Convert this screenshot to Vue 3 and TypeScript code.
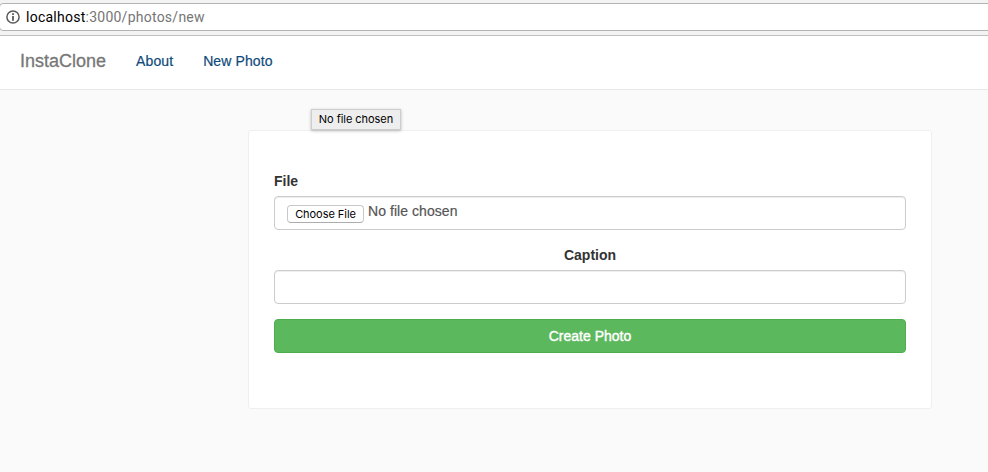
<script setup lang="ts">
import { ref } from 'vue'

interface NavLink {
  label: string
  href: string
}

const links: NavLink[] = [
  { label: 'About', href: '#about' },
  { label: 'New Photo', href: '#new' },
]
const caption = ref<string>('')
const fileStatus = ref<string>('No file chosen')
</script>

<template>
  <div class="window">
    <header class="toolbar">
      <div class="address">
        <svg class="info" width="14" height="14" viewBox="0 0 14 14" aria-hidden="true">
          <circle cx="7" cy="7" r="6.1" fill="none" stroke="#5a5a5a" stroke-width="1.5" />
          <rect x="6.1" y="3.2" width="1.8" height="1.8" fill="#5a5a5a" />
          <rect x="6.1" y="6" width="1.8" height="4.8" fill="#5a5a5a" />
        </svg>
        <span class="url"><span class="host">localhost</span>:3000/photos/new</span>
      </div>
    </header>

    <nav class="navbar">
      <a class="brand" href="#">InstaClone</a>
      <a v-for="link in links" :key="link.label" class="nav-link" :href="link.href">{{ link.label }}</a>
    </nav>

    <main class="page">
      <form class="card" @submit.prevent>
        <label class="label" for="file">File</label>
        <div class="control file">
          <button id="file" class="choose" type="button">Choose File</button>
          <span class="status">{{ fileStatus }}</span>
        </div>
        <label class="label centered" for="caption">Caption</label>
        <input id="caption" v-model="caption" class="control" type="text" />
        <button class="submit" type="submit"><span class="submit-text">Create Photo</span></button>
        <div class="tooltip" role="tooltip">{{ fileStatus }}</div>
      </form>
    </main>
  </div>
</template>

<style>
body {
  background: #fafafa;
}
</style>

<style scoped>
.window,
.window * {
  box-sizing: border-box;
}
.window {
  min-height: 472px;
  overflow: hidden;
  background: #fafafa;
  color: #333;
  font: 14px/20px "Liberation Sans", Arial, sans-serif;
}
.toolbar {
  height: 36px;
  padding-top: 3px;
  background: #f3f3f3;
  border-bottom: 1px solid #bfbfbf;
}
.address {
  display: flex;
  align-items: center;
  height: 28px;
  margin: 0 -6px 0 -1px;
  padding-left: 6px;
  background: #fff;
  border: 1px solid #b4b4b4;
  border-radius: 4px;
}
.info {
  flex: none;
  margin-right: 6px;
}
.url {
  color: #757575;
  font-family: Roboto, sans-serif;
  font-size: 14px;
  letter-spacing: 0.25px;
  white-space: nowrap;
}
.host {
  color: #000;
}
.navbar {
  display: flex;
  align-items: center;
  height: 54px;
  padding: 0 20px 3px;
  background: #fff;
  border-bottom: 1px solid #e7e7e7;
}
.brand {
  margin-right: 30px;
  color: #777;
  font-size: 18px;
  text-decoration: none;
  -webkit-text-stroke: 0.3px #777;
}
.nav-link {
  margin-right: 30px;
  color: #125688;
  color: #0f4a7b;
  letter-spacing: 0.1px;
  text-decoration: none;
  -webkit-text-stroke: 0.2px #0f4a7b;
}
.page {
  padding: 40px 56px 0 248px;
}
.card {
  position: relative;
  display: flex;
  flex-direction: column;
  height: 279px;
  padding: 40px 25px;
  background: #fff;
  border: 1px solid #efefef;
  border-radius: 3px;
}
.label {
  margin-bottom: 5px;
  font-weight: bold;
}
.centered {
  text-align: center;
}
.control {
  flex: none;
  width: 100%;
  height: 34px;
  margin: 0 0 15px;
  padding: 6px 12px;
  background: #fff;
  border: 1px solid #ccc;
  border-radius: 4px;
  outline: none;
  box-shadow: inset 0 1px 1px rgba(0, 0, 0, 0.075);
  color: #555;
  font: inherit;
}
.file {
  display: flex;
  align-items: flex-start;
  padding-top: 4px;
}
.status {
  letter-spacing: 0.06px;
  -webkit-text-stroke: 0.2px #555;
}
.choose {
  width: 77px;
  height: 18px;
  margin: 4px 4px 0 0;
  padding: 0;
  background: #fff;
  border: 1px solid #c8c8c8;
  border-bottom-color: #adadad;
  border-radius: 4px;
  color: #000;
  font: 11px/16px Inter, sans-serif;
  letter-spacing: -0.05px;
  white-space: nowrap;
}
.submit {
  flex: none;
  width: 100%;
  height: 34px;
  padding: 0;
  background: #5cb85c;
  border: 1px solid #4cae4c;
  border-radius: 4px;
  color: #fff;
  font: inherit;
}
.submit-text {
  -webkit-text-stroke: 0.4px #fff;
}
.tooltip {
  position: absolute;
  top: -22px;
  left: 62px;
  width: 90px;
  height: 21px;
  background: #eee;
  border: 1px solid #cdcdcd;
  box-shadow: 0 1px 3px rgba(0, 0, 0, 0.25);
  color: #000;
  font: 11px/19px Inter, sans-serif;
  letter-spacing: -0.05px;
  text-align: center;
  white-space: nowrap;
}
</style>
